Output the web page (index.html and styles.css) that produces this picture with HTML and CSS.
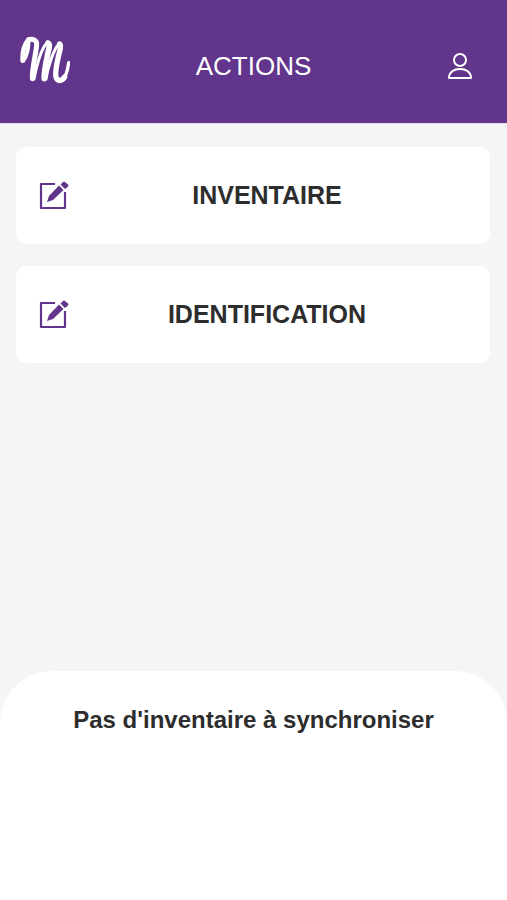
FILE: index.html
```html
<!DOCTYPE html>
<html lang="fr">
<head>
  <meta charset="utf-8">
  <meta name="viewport" content="width=device-width, initial-scale=1">
  <title>Actions</title>
  <link rel="stylesheet" href="styles.css">
</head>
<body>
  <header class="topbar">
    <a class="logo" href="#" aria-label="Accueil">
      <svg width="50" height="48" viewBox="30 33 150 144" fill="none" stroke="currentColor" stroke-linecap="round" stroke-linejoin="round">
        <path stroke-width="14" d="M38 107C37 84 43 58 56 44"/>
        <path stroke-width="11" d="M41 106C50 94 56 68 56 44"/>
        <path stroke-width="15" d="M56 44C70 41 81 46 80 58C79 82 66 128 67 161"/>
        <path stroke-width="9" d="M72 162C78 128 94 66 112 54"/>
        <path stroke-width="17" d="M114 54C121 57 117 70 114 83C108 112 101 142 103 161"/>
        <path stroke-width="9" d="M108 162C113 128 132 68 148 57"/>
        <path stroke-width="16" d="M149 57C154 62 150 76 146 91C140 118 133 146 139 159C144 171 157 167 164 156"/>
        <path stroke-width="10" d="M157 165C167 157 173 135 176 113"/>
      </svg>
    </a>
    <h1 class="title">ACTIONS</h1>
    <button class="profile" type="button" aria-label="Profil">
      <svg width="26" height="28" viewBox="0 0 26 28" fill="none" stroke="currentColor" stroke-width="2" stroke-linejoin="round">
        <ellipse cx="13" cy="8" rx="6" ry="6"/>
        <path d="M2 26C2 20 7 17 13 17C19 17 24 20 24 26Z"/>
      </svg>
    </button>
  </header>

  <main class="actions">
    <button class="card" type="button">
      <svg class="card-icon" width="28" height="28" viewBox="0 0 28 28" aria-hidden="true">
        <path fill="none" stroke="currentColor" stroke-width="2.2" stroke-linejoin="round" d="M15 3H1V27H25V11"/>
        <path fill="currentColor" d="M7 21L9 15L19 4.500L23.500 9L13 19Z"/>
        <path fill="currentColor" d="M20.500 3.500L23 1Q24 0 25 1L28 3.500Q29 4.500 28 5.500L25 8Z"/>
      </svg>
      <span class="card-label">INVENTAIRE</span>
    </button>
    <button class="card" type="button">
      <svg class="card-icon" width="28" height="28" viewBox="0 0 28 28" aria-hidden="true">
        <path fill="none" stroke="currentColor" stroke-width="2.2" stroke-linejoin="round" d="M15 3H1V27H25V11"/>
        <path fill="currentColor" d="M7 21L9 15L19 4.500L23.500 9L13 19Z"/>
        <path fill="currentColor" d="M20.500 3.500L23 1Q24 0 25 1L28 3.500Q29 4.500 28 5.500L25 8Z"/>
      </svg>
      <span class="card-label">IDENTIFICATION</span>
    </button>
  </main>

  <section class="sheet">
    <p class="sheet-text">Pas d'inventaire à synchroniser</p>
  </section>
</body>
</html>
```
FILE: styles.css
```css
* {
  box-sizing: border-box;
}

body {
  display: flex;
  flex-direction: column;
  min-height: 100vh;
  margin: 0;
  background: #f5f5f5;
  color: #2d2d2d;
  font-family: "Liberation Sans", Arial, sans-serif;
}

button {
  border: 0;
  font: inherit;
  cursor: pointer;
}

svg {
  display: block;
}

.topbar {
  display: grid;
  grid-template-columns: 1fr auto 1fr;
  align-items: start;
  padding: 36px 34px 27px 20px;
  border-bottom: 1px solid #e4dcec;
  background: #60358b;
  color: #fff;
}

.logo {
  justify-self: start;
  color: inherit;
}

.title {
  margin: 0;
  padding-left: 14px;
  font-size: 26px;
  font-weight: 400;
  line-height: 60px;
}

.profile {
  justify-self: end;
  height: 60px;
  padding: 0;
  background: none;
  color: inherit;
}

.actions {
  display: flex;
  flex: 1;
  flex-direction: column;
  gap: 22px;
  padding: 23px 17px 24px 16px;
}

.card {
  display: flex;
  align-items: center;
  padding: 34px 24px 35px;
  border-radius: 10px;
  background: #fff;
  color: #60358b;
}

.card-icon {
  flex: none;
  overflow: visible;
}

.card-label {
  flex: 1;
  color: #2d2d2d;
  font-size: 25px;
  font-weight: 700;
  line-height: 28px;
  text-align: center;
}

.sheet {
  min-height: 229px;
  padding: 35px 24px;
  border-radius: 52px 52px 0 0;
  background: #fff;
}

.sheet-text {
  margin: 0;
  font-size: 24px;
  font-weight: 700;
  line-height: 28px;
  text-align: center;
}
```
